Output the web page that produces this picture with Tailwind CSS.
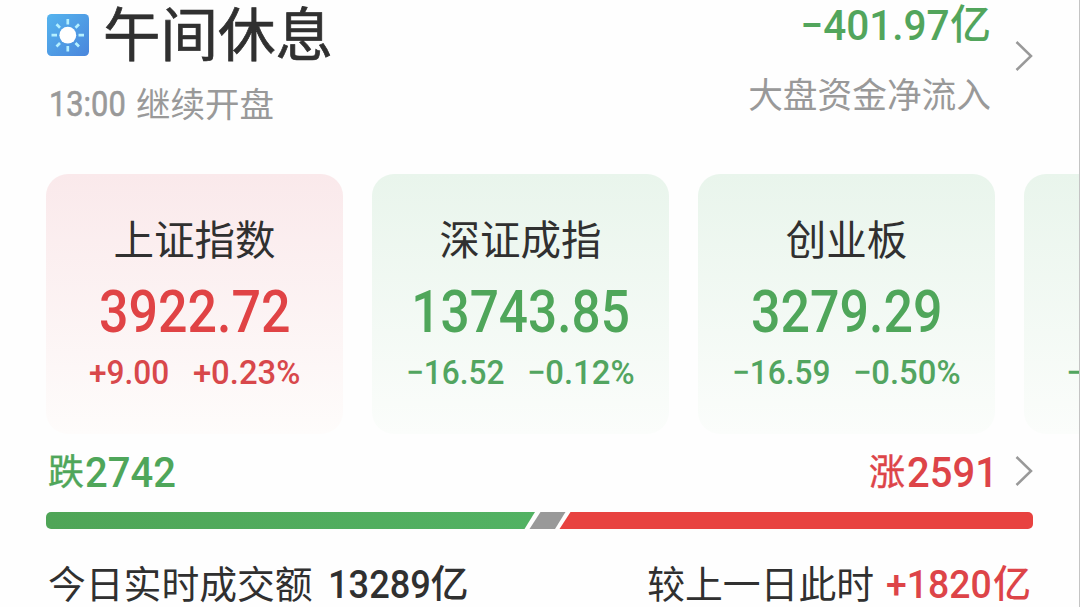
<!DOCTYPE html>
<html lang="zh-CN">
<head>
    <meta charset="UTF-8">
    <meta name="viewport" content="width=device-width, initial-scale=1.0">
    <title>大盘行情</title>
    <script src="https://cdn.jsdelivr.net/npm/@tailwindcss/browser@4"></script>
</head>
<body class="w-[1080px] h-[607px] overflow-hidden bg-[#fefefe] border-r border-[#c4c4c4] font-['Noto_Sans_CJK_SC',sans-serif] text-[#303030] whitespace-nowrap">
    <!-- market status -->
    <header class="flex justify-between h-[174px] pl-[46px] pr-[46px]">
        <div>
            <div class="flex items-center h-[70px] gap-[14px]">
                <svg class="w-[43px] h-[43px]" viewBox="0 0 43 43">
                    <defs>
                        <linearGradient id="sky" x1="0" y1="0" x2="1" y2="1">
                            <stop offset="0" stop-color="#55b4ee"/>
                            <stop offset="1" stop-color="#4a86dc"/>
                        </linearGradient>
                    </defs>
                    <rect x="1" y="0" width="42" height="42" rx="4.5" fill="url(#sky)"/>
                    <circle cx="21.8" cy="21.2" r="8.4" fill="#fff"/>
                    <path d="M21.8 5v5.5M21.8 32v5.5M5.500 21.2h5.500M32.500 21.2h5.500M10.500 10.200l3.500 3.500M29.500 29l3.500 3.500M33 10.200l-3.500 3.500M14 29l-3.500 3.500" stroke="#b4f0ff" stroke-width="2.7" fill="none"/>
                </svg>
                <h1 class="text-[57.5px] leading-[62px] -translate-y-[4px] [-webkit-text-stroke:0.7px_#303030]">午间休息</h1>
            </div>
            <div class="flex items-center h-[68px] pl-[2px] text-[#999]">
                <span class="w-[88px] font-[Roboto] text-[35px]"><span class="inline-block origin-left scale-x-[.88] translate-x-[1px] translate-y-[1px] [-webkit-text-stroke:0.6px_#999]">13:00</span></span>
                <span class="text-[34.5px] -translate-y-[1px]">继续开盘</span>
            </div>
        </div>
        <div class="flex">
            <div class="flex flex-col items-end">
                <div class="flex items-center h-[50px] text-[#52a55c] font-medium">
                    <span class="font-[Roboto] text-[42px] inline-block origin-right scale-x-[.965]">−401.97</span>
                    <span class="text-[41px] leading-[50px] -translate-y-[4px]">亿</span>
                </div>
                <div class="h-[90px] text-[34.7px] leading-[86px] text-[#999]">大盘资金净流入</div>
            </div>
            <svg class="w-[18px] h-[32px] mt-[40px] ml-[24px]" viewBox="0 0 18 32" fill="none" stroke="#999" stroke-width="2.5"><path d="M1.500 2l14.500 14L1.500 30"/></svg>
        </div>
    </header>

    <!-- index cards -->
    <section class="flex gap-[29px] pl-[46px] h-[260px] overflow-hidden">
        <div class="shrink-0 w-[297px] h-[260px] pt-[39px] rounded-[22px] bg-linear-to-b from-[#fae9eb] to-[#fefcfb] flex flex-col items-center">
            <h2 class="text-[40.5px] leading-[50px]">上证指数</h2>
            <div class="font-[Roboto] font-medium text-[59px] leading-[98px] text-[#e04345] scale-x-[.88]">3922.72</div>
            <div class="flex justify-between w-[211px] font-[Roboto] font-medium text-[34px] leading-[22px] text-[#d8484b]">
                <span class="origin-left scale-x-[.93]">+9.00</span><span class="origin-right scale-x-[.965]">+0.23%</span>
            </div>
        </div>
        <div class="shrink-0 w-[297px] h-[260px] pt-[39px] rounded-[22px] bg-linear-to-b from-[#e9f5ec] to-[#fbfdfb] flex flex-col items-center">
            <h2 class="text-[40.5px] leading-[50px]">深证成指</h2>
            <div class="font-[Roboto] font-medium text-[59px] leading-[98px] text-[#4fa65a] scale-x-[.87]">13743.85</div>
            <div class="flex justify-between w-[229px] font-[Roboto] font-medium text-[34px] leading-[22px] text-[#52a560]">
                <span class="origin-left scale-x-[.93]">−16.52</span><span class="origin-right scale-x-[.965]">−0.12%</span>
            </div>
        </div>
        <div class="shrink-0 w-[297px] h-[260px] pt-[39px] rounded-[22px] bg-linear-to-b from-[#e9f5ec] to-[#fbfdfb] flex flex-col items-center">
            <h2 class="text-[40.5px] leading-[50px]">创业板</h2>
            <div class="font-[Roboto] font-medium text-[59px] leading-[98px] text-[#4fa65a] scale-x-[.88]">3279.29</div>
            <div class="flex justify-between w-[229px] font-[Roboto] font-medium text-[34px] leading-[22px] text-[#52a560]">
                <span class="origin-left scale-x-[.93]">−16.59</span><span class="origin-right scale-x-[.965]">−0.50%</span>
            </div>
        </div>
        <div class="shrink-0 w-[297px] h-[260px] pt-[187px] pl-[42px] rounded-[22px] bg-linear-to-b from-[#e9f5ec] to-[#fbfdfb]">
            <div class="font-[Roboto] font-medium text-[34px] leading-[22px] text-[#52a560]">−</div>
        </div>
    </section>

    <!-- falling / rising -->
    <section class="flex justify-between h-[78px] pl-[48px] pr-[46px]">
        <div class="flex items-center h-[76px] text-[#4fa65a]">
            <span class="text-[36px] -translate-y-[3px] [-webkit-text-stroke:0.4px_#4fa65a]">跌</span>
            <span class="font-[Roboto] font-medium text-[43px] origin-left scale-x-[.93] translate-x-[1px]">2742</span>
        </div>
        <div class="flex items-center h-[76px] text-[#dd4448]">
            <span class="w-[38px] text-[36px] -translate-y-[3px] [-webkit-text-stroke:0.4px_#dd4448]">涨</span>
            <span class="w-[108px] font-[Roboto] font-medium text-[43px]"><span class="inline-block origin-left scale-x-[.93]">2591</span></span>
            <svg class="w-[18px] h-[32px] -translate-y-[1px]" viewBox="0 0 18 32" fill="none" stroke="#999" stroke-width="2.5"><path d="M1.500 2l14.500 14L1.500 30"/></svg>
        </div>
    </section>
    <svg class="block ml-[46px] w-[987px] h-[17px]" viewBox="0 0 987 17">
        <defs>
            <linearGradient id="fall" x1="0" y1="0" x2="1" y2="0">
                <stop offset="0" stop-color="#4fa557"/>
                <stop offset="1" stop-color="#52b263"/>
            </linearGradient>
        </defs>
        <path d="M5 0H489L478.500 17H5a5 5 0 0 1-5-5V5a5 5 0 0 1 5-5z" fill="url(#fall)"/>
        <path d="M494.500 0H519.500L509 17H483.500z" fill="#999"/>
        <path d="M524.500 0H982a5 5 0 0 1 5 5v7a5 5 0 0 1-5 5H513.500z" fill="#e84240"/>
    </svg>

    <!-- turnover -->
    <footer class="flex justify-between h-[78px] pl-[48px] pr-[48px] pt-[15px]">
        <div class="flex items-center h-[80px]">
            <span class="text-[37.8px] -translate-y-[2px]">今日实时成交额</span>
            <span class="w-[103px] ml-[15px] font-[Roboto] font-medium text-[38.5px]"><span class="inline-block origin-left scale-x-[.94] translate-y-[1px]">13289</span></span>
            <span class="text-[38px] font-medium -translate-y-[4px]">亿</span>
        </div>
        <div class="flex items-center h-[80px]">
            <span class="text-[37.8px] -translate-y-[2px]">较上一日此时</span>
            <span class="w-[107px] ml-[12px] font-[Roboto] font-medium text-[38.5px] text-[#dd4448]"><span class="inline-block origin-left scale-x-[.97] translate-y-[1px]">+1820</span></span>
            <span class="text-[38px] font-medium text-[#dd4448] -translate-y-[4px]">亿</span>
        </div>
    </footer>
</body>
</html>
